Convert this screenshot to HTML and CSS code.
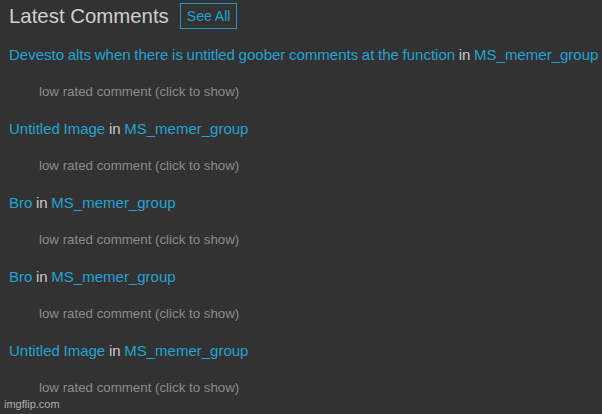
FILE: index.html
```html
<!DOCTYPE html>
<html>
<head>
<meta charset="utf-8">
<link rel="stylesheet" href="styles.css">
</head>
<body>
<div class="page">
  <div class="header">
    <h2 class="title">Latest Comments</h2>
    <a class="see-all">See All</a>
  </div>
  <div class="list">
    <div class="item">
      <div class="head"><a class="link">Devesto alts when there is untitled goober comments at the function</a> in <a class="link">MS_memer_group</a></div>
      <div class="low">low rated comment (click to show)</div>
    </div>
    <div class="item">
      <div class="head"><a class="link">Untitled Image</a> in <a class="link">MS_memer_group</a></div>
      <div class="low">low rated comment (click to show)</div>
    </div>
    <div class="item">
      <div class="head"><a class="link">Bro</a> in <a class="link">MS_memer_group</a></div>
      <div class="low">low rated comment (click to show)</div>
    </div>
    <div class="item">
      <div class="head"><a class="link">Bro</a> in <a class="link">MS_memer_group</a></div>
      <div class="low">low rated comment (click to show)</div>
    </div>
    <div class="item">
      <div class="head"><a class="link">Untitled Image</a> in <a class="link">MS_memer_group</a></div>
      <div class="low">low rated comment (click to show)</div>
    </div>
  </div>
</div>
<div class="watermark">imgflip.com</div>
</body>
</html>
```
FILE: styles.css
```css
html, body {
  margin: 0;
  padding: 0;
  background: #323232;
  height: 100%;
  overflow: hidden;
}
body {
  font-family: "Liberation Sans", Arial, sans-serif;
  color: #cccccc;
  position: relative;
}
.page {
  padding: 3px 0 0 9px;
}
.header {
  display: flex;
  align-items: center;
  height: 26px;
}
.title {
  margin: 0;
  font-size: 20.4px;
  line-height: 24px;
  font-weight: normal;
  color: #cfcfcf;
}
.see-all {
  margin-left: 11px;
  box-sizing: border-box;
  height: 26px;
  padding: 0 6px;
  border: 1px solid #1f9ac6;
  color: #22a4d4;
  font-size: 14px;
  line-height: 24px;
}
.list {
  margin-top: 17px;
}
.item {
  display: flex;
  flex-direction: column;
  gap: 20px;
  padding-bottom: 20px;
}
.head {
  font-size: 15px;
  line-height: 18px;
  color: #cccccc;
  white-space: nowrap;
  word-spacing: -0.5px;
}
.link {
  color: #22a4d4;
}
.low {
  font-size: 13.3px;
  line-height: 16px;
  padding-left: 30px;
  color: #8c8c8c;
}
.watermark {
  position: absolute;
  left: 4px;
  bottom: 3px;
  font-size: 11px;
  line-height: 13px;
  color: #b0b0b0;
}
```
